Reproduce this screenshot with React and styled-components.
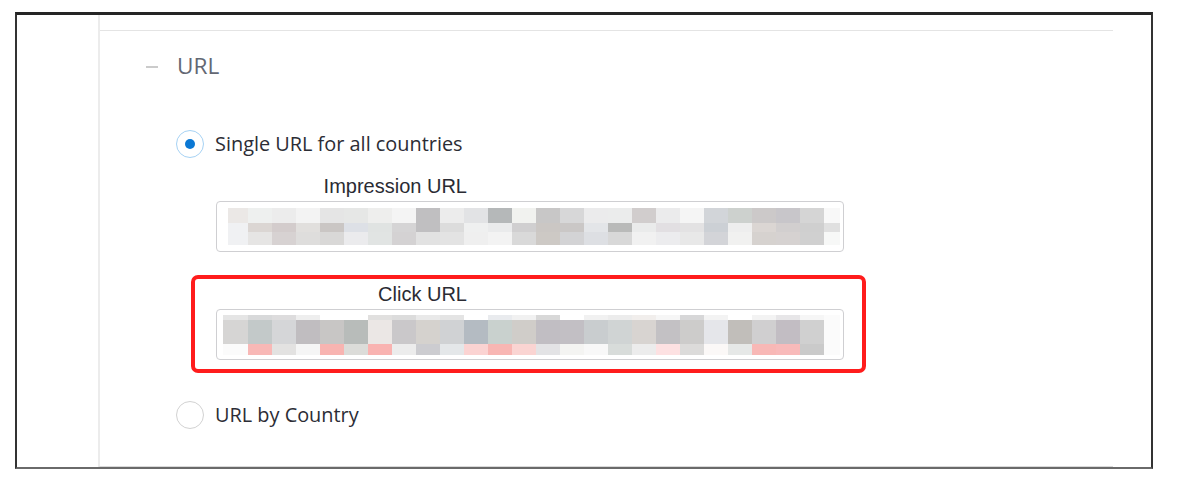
import React from "react";
import styled, { createGlobalStyle } from "styled-components";

const Global = createGlobalStyle`
  html, body { margin: 0; padding: 0; background: #ffffff; }
  body { font-family: "Open Sans", "Noto Sans", sans-serif; }
  * { box-sizing: border-box; }
`;

const Frame = styled.div`
  margin: 12px 0 0 15px;
  width: 1138px;
  height: 457px;
  border-top: 3px solid #252525;
  border-left: 2px solid #333333;
  border-right: 2px solid #333333;
  border-bottom: 2px solid #6a6a6a;
  display: flex;
`;

const Panel = styled.div`
  margin-left: 81px;
  width: 1015px;
  border-left: 2px solid #ececec;
  border-bottom: 1px solid #d9d9d9;
  display: flex;
  flex-direction: column;
`;

const PanelHead = styled.div`
  height: 16px;
  border-bottom: 1px solid #e4e4e4;
`;

const Body = styled.div`
  display: flex;
  flex-direction: column;
  padding-left: 46px;
`;

const SectionHeader = styled.div`
  margin-top: 19px;
  display: flex;
  align-items: center;
  height: 32px;
  gap: 19px;
`;

const Dash = styled.span`
  width: 12px;
  height: 2px;
  background: #cbcbcb;
  margin-top: 2px;
`;

const SectionTitle = styled.span`
  font-family: "Open Sans", sans-serif;
  font-size: 22.6px;
  line-height: 32px;
  color: #636873;
`;

const Options = styled.div`
  display: flex;
  flex-direction: column;
  padding-left: 30px;
`;

const RadioRow = styled.label`
  display: flex;
  align-items: center;
  gap: 11px;
  height: 28px;
  margin-top: ${(p) => p.$top}px;
`;

const RadioCircle = styled.span`
  width: 28px;
  height: 28px;
  border-radius: 50%;
  border: 1.5px solid ${(p) => (p.$checked ? "#a6d2f4" : "#d2d2d2")};
  display: flex;
  align-items: center;
  justify-content: center;
  flex: none;
`;

const RadioDot = styled.span`
  width: 10px;
  height: 10px;
  border-radius: 50%;
  background: #0b78d4;
`;

const RadioText = styled.span`
  font-family: "Open Sans", sans-serif;
  font-size: 19.9px;
  line-height: 28px;
  color: #2c2d35;
`;

const Fields = styled.div`
  display: flex;
  flex-direction: column;
  padding-left: 40px;
`;

const Field = styled.div`
  display: flex;
  flex-direction: column;
  margin-top: ${(p) => p.$top || 0}px;
`;

const FieldLabel = styled.div`
  width: 251px;
  text-align: right;
  font-family: "Liberation Sans", Arial, sans-serif;
  font-size: 20px;
  line-height: 23px;
  color: #2a2b33;
`;

const InputBox = styled.div`
  margin-top: 3px;
  width: 628px;
  height: 51px;
  border: 1px solid #cfcfd2;
  border-radius: 4px;
  padding: ${(p) => p.$pad};
  background: #ffffff;
`;

const Mosaic = styled.div`
  display: grid;
  grid-template-columns: ${(p) => p.$first}px repeat(24, 24px) 16px;
  grid-template-rows: ${(p) => p.$rows};
`;

const Cell = styled.span`
  background: ${(p) => p.$bg};
`;

const Highlight = styled.div`
  margin-top: 23px;
  margin-left: -25px;
  width: 675px;
  border: 4px solid #ff1c1c;
  border-radius: 7px;
  padding: 4px 0 9px 21px;
`;

const imp = [
  ["#ebe8e6","#eef0ef","#ececec","#f3f3f3","#e5e5e5","#e6e7e6","#eeeeed","#f4f4f4","#c0bfc1","#ececec","#e2e3e5","#b5b8b9","#f1f2ef","#c8c7c7","#d7d7d8","#ebebec","#ebecec","#d1cdcd","#ebebec","#f5f5f5","#d2d5d9","#cdd1ce","#ccc9c9","#c8c6ca","#d5d5d5","#f8f8f8"],
  ["#f0f1f3","#dbd6d3","#d3cccc","#e1dfdd","#cac6c4","#dde0e6","#e0e3e2","#d5d4d5","#c0bfc1","#dcdcdc","#eff0f0","#eaebec","#d0cfd0","#cbc7c4","#cac7c6","#e3e5e8","#b9bab9","#eaebeb","#e2dfe2","#e3e2e3","#ccd0d5","#eeeeee","#dbd6d3","#d2cfcf","#cfcfcf","#e0e0e0"],
  ["#f0f1f3","#e6e5e4","#d7d2d2","#dedddc","#d9d8d7","#ebebed","#e1e4e3","#d4d2d3","#e2e2e2","#e3e3e3","#efefef","#f3f3f3","#d9d9d9","#cdc9c5","#d3d3d5","#dddfe3","#d8d8d8","#f1f1f1","#ececee","#e8e8e8","#d3d4d8","#f1f1f0","#d6d2cf","#d6d2d1","#d0d0d0","#f7f8f7"],
];

const clk = [
  ["#e5e5e5","#d8d9da","#dddcdd","#eeeeee","#ffffff","#ffffff","#e1e0df","#dcdcdc","#e9e9e9","#e4e4e4","#ffffff","#e9ebee","#f1f1f1","#d8d8d8","#ffffff","#f1f1f1","#ececec","#f1eeec","#f6f6f6","#d7d7d8","#f3f3f3","#ffffff","#f3f3f3","#e7e6e8","#f6f6f6","#fbfbfb"],
  ["#d6d5d4","#c3c9c9","#d5d6d8","#c0bdc0","#c8c6c5","#b8bcba","#ebe7e5","#cac8ca","#d5d2ce","#d0d2d4","#b4bbc2","#c9d1ce","#d0cdc9","#c1bec3","#c2bfc4","#c9cdcf","#d0d4d4","#d8d4d1","#c3c1c4","#cdcccb","#e5e6ea","#c1beba","#d0cfd0","#c2bdc3","#d0d0d0","#fbfbfb"],
  ["#fbfbfb","#f8b8b6","#e3e2e1","#f5f5f5","#f8b4b1","#dcdcd9","#f9b3b1","#ececec","#ccccd0","#e4e7e9","#fbd3d2","#f8b6b3","#fad4d2","#e3e3e5","#f4f4f2","#f8f8f8","#d8dcda","#ececec","#fde1e2","#dcdbda","#fbf8f7","#e6e8e7","#f8b8b6","#f8baba","#cacaca","#fbfbfb"],
];

function Pixelated({ data, first, rows }) {
  return (
    <Mosaic $first={first} $rows={rows}>
      {data.map((row, r) =>
        row.map((c, i) => <Cell key={`${r}-${i}`} $bg={c} />)
      )}
    </Mosaic>
  );
}

function Radio({ checked, label, top }) {
  return (
    <RadioRow $top={top}>
      <RadioCircle $checked={checked}>{checked && <RadioDot />}</RadioCircle>
      <RadioText>{label}</RadioText>
    </RadioRow>
  );
}

export default function App() {
  return (
    <>
      <Global />
      <Frame>
        <Panel>
          <PanelHead />
          <Body>
            <SectionHeader>
              <Dash />
              <SectionTitle>URL</SectionTitle>
            </SectionHeader>
            <Options>
              <Radio checked label="Single URL for all countries" top={48} />
              <Fields>
                <Field $top={17}>
                  <FieldLabel>Impression URL</FieldLabel>
                  <InputBox $pad="6px 0 0 11px">
                    <Pixelated data={imp} first={20} rows="15px 9px 13px" />
                  </InputBox>
                </Field>
                <Highlight>
                  <Field>
                    <FieldLabel>Click URL</FieldLabel>
                    <InputBox $pad="5px 0 0 6px">
                      <Pixelated data={clk} first={25} rows="5px 24px 11px" />
                    </InputBox>
                  </Field>
                </Highlight>
              </Fields>
              <Radio label="URL by Country" top={28} />
            </Options>
          </Body>
        </Panel>
      </Frame>
    </>
  );
}
